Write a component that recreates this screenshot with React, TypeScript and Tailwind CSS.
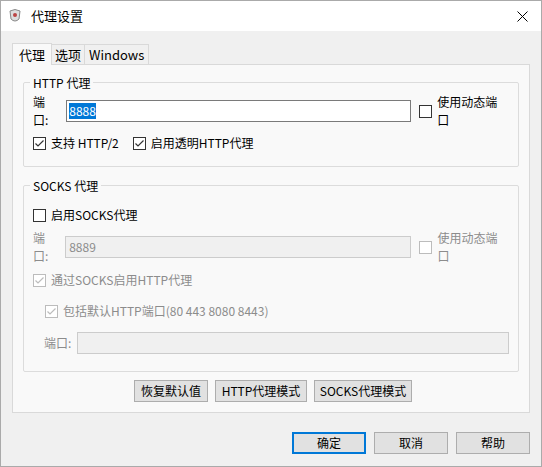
import React from "react";

const Check = ({ checked, disabled }: { checked?: boolean; disabled?: boolean }) => (
  <span className={`inline-flex w-[13px] h-[13px] border ${disabled ? "border-[#bcbcbc]" : "border-[#333]"} bg-white items-center justify-center shrink-0`}>
    {checked && (
      <svg width="11" height="11" viewBox="0 0 11 11">
        <path d="M1.5 5.5 L4 8 L9.5 2.5" fill="none" stroke={disabled ? "#bcbcbc" : "#333"} strokeWidth="1.2" />
      </svg>
    )}
  </span>
);

const Btn = ({ children, w, primary }: { children: React.ReactNode; w: string; primary?: boolean }) => (
  <div className={`${w} h-[22px] flex items-center justify-center bg-[#e1e1e1] border ${primary ? "border-[#0078d7] border-2" : "border-[#adadad]"}`}>{children}</div>
);

export default function App() {
  return (
    <div className="w-[542px] h-[467px] bg-[#f0f0f0] border border-[#aaa] text-[12px] text-black flex flex-col" style={{ fontFamily: '"Noto Sans CJK SC", "Noto Sans", sans-serif' }}>
      <div className="h-[30px] bg-white flex items-center shrink-0">
        <svg className="ml-[7px]" width="14" height="16" viewBox="0 0 14 16">
          <path d="M2 3 Q7 0 12 3 L11 11 Q7 15 3 11 Z" fill="#ddd" stroke="#888" strokeWidth="1" />
          <circle cx="7" cy="7" r="2" fill="#b44" />
        </svg>
        <span className="ml-[9px] text-[13px]">代理设置</span>
        <svg className="ml-auto mr-[13px]" width="11" height="11" viewBox="0 0 11 11">
          <path d="M0.5 0.5 L10.5 10.5 M10.5 0.5 L0.5 10.5" stroke="#000" strokeWidth="1" />
        </svg>
      </div>
      <div className="px-[11px] pt-[12px]">
        <div className="flex items-end h-[21px] relative z-10">
          <div className="h-[22px] px-[6px] bg-[#f9f9f9] border border-[#d9d9d9] border-b-0 flex items-center mb-[-1px] text-[13px]">代理</div>
          <div className="h-[20px] px-[3px] border border-[#d9d9d9] border-b-0 border-l-0 flex items-center text-[13px]">选项</div>
          <div className="h-[20px] px-[4px] border border-[#d9d9d9] border-b-0 border-l-0 flex items-center text-[13px]">Windows</div>
        </div>
        <div className="h-[349px] bg-[#f9f9f9] border border-[#d9d9d9] px-[10px] pt-[17px]">
          <div className="relative border border-[#dcdcdc] rounded-[2px] h-[85px] px-[9px] pt-[17px]">
            <span className="absolute left-[6px] top-[-9px] bg-[#f9f9f9] px-[3px]">HTTP 代理</span>
            <div className="flex items-center h-[22px]">
              <span>端口:</span>
              <div className="ml-[6px] w-[346px] h-[22px] bg-white border border-[#7a7a7a] flex items-center pl-[2px]">
                <span className="bg-[#0078d7] text-white leading-[16px]">8888</span>
              </div>
              <span className="ml-[8px] flex items-center gap-[5px]"><Check />使用动态端口</span>
            </div>
            <div className="flex items-center mt-[12px] gap-[5px]">
              <Check checked />支持 HTTP/2
              <span className="ml-[4px]" /><Check checked />启用透明HTTP代理
            </div>
          </div>
          <div className="relative border border-[#dcdcdc] rounded-[2px] h-[187px] mt-[18px] px-[9px] pt-[21px]">
            <span className="absolute left-[6px] top-[-9px] bg-[#f9f9f9] px-[3px]">SOCKS 代理</span>
            <div className="flex items-center gap-[5px] h-[16px]"><Check />启用SOCKS代理</div>
            <div className="flex items-center h-[22px] mt-[13px] text-[#8c8c8c]">
              <span>端口:</span>
              <div className="ml-[5px] w-[348px] h-[22px] bg-[#f0f0f0] border border-[#cccccc] flex items-center pl-[3px]">8889</div>
              <span className="ml-[8px] flex items-center gap-[5px]"><Check disabled />使用动态端口</span>
            </div>
            <div className="flex items-center gap-[5px] mt-[13px] text-[#8c8c8c]"><Check checked disabled />通过SOCKS启用HTTP代理</div>
            <div className="flex items-center gap-[5px] mt-[13px] ml-[12px] text-[#8c8c8c]"><Check checked disabled />包括默认HTTP端口(80 443 8080 8443)</div>
            <div className="flex items-center h-[22px] mt-[12px] ml-[11px] text-[#8c8c8c]">
              <span>端口:</span>
              <div className="ml-[6px] w-[432px] h-[22px] bg-[#f0f0f0] border border-[#cccccc]" />
            </div>
          </div>
          <div className="flex justify-center gap-[7px] mt-[8px] pl-[4px]">
            <Btn w="w-[74px]">恢复默认值</Btn>
            <Btn w="w-[92px]">HTTP代理模式</Btn>
            <Btn w="w-[98px]">SOCKS代理模式</Btn>
          </div>
        </div>
      </div>
      <div className="flex justify-end gap-[8px] pr-[11px] mt-[19px]">
        <Btn w="w-[74px]" primary>确定</Btn>
        <Btn w="w-[74px]">取消</Btn>
        <Btn w="w-[74px]">帮助</Btn>
      </div>
    </div>
  );
}
